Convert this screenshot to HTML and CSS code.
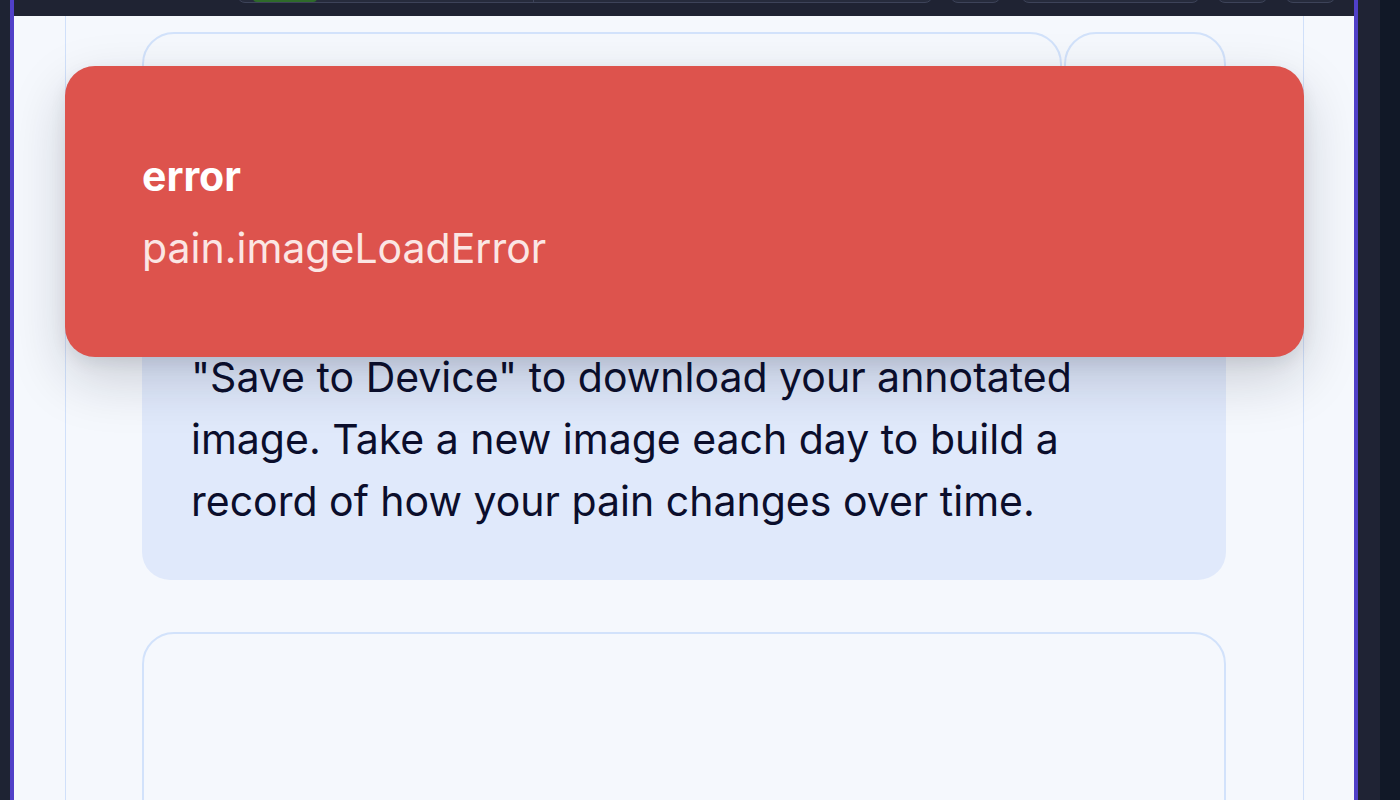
FILE: index.html
```html
<!DOCTYPE html>
<html lang="en">
<head>
<meta charset="utf-8">
<title>Pain Tracker</title>
<link rel="stylesheet" href="styles.css">
</head>
<body>
<div class="shell">
  <div class="gutter-left"></div>
  <div class="frame">
    <div class="topbar">
      <div class="tb-search">
        <span class="tb-green"></span>
        <span class="tb-divider"></span>
      </div>
      <div class="tb-btn tb-sm"></div>
      <div class="tb-btn tb-wide"></div>
      <div class="tb-btn tb-sm"></div>
      <div class="tb-btn tb-sm"></div>
    </div>
    <div class="stage">
      <div class="page">
        <div class="tabs">
          <div class="tab tab-main"></div>
          <div class="tab tab-side"></div>
        </div>
        <div class="info">
          <p><span class="lead">When you have finished marking your pain, tap</span> "Save to Device" to download your annotated image. Take a new image each day to build a record of how your pain changes over time.</p>
        </div>
        <div class="canvas-card"></div>
      </div>
      <div class="toast" role="alert">
        <div class="toast-title">error</div>
        <div class="toast-msg">pain.imageLoadError</div>
      </div>
    </div>
  </div>
  <div class="gutter-right"></div>
  <div class="gutter-edge"></div>
</div>
</body>
</html>
```
FILE: styles.css
```css
html, body {
  margin: 0;
  padding: 0;
  height: 100%;
  overflow: hidden;
  background: #1e2333;
  font-family: Inter, "Noto Sans", "Liberation Sans", sans-serif;
}

.shell {
  display: flex;
  height: 800px;
}

.gutter-left {
  width: 10px;
  background: #1e2333;
  flex: none;
}

.frame {
  width: 1340px;
  flex: none;
  border-left: 4px solid #5040c8;
  border-right: 4px solid #5040c8;
  display: flex;
  flex-direction: column;
  background: #f5f8fd;
}

.gutter-right {
  width: 22px;
  background: #1f2334;
  flex: none;
}

.gutter-edge {
  flex: 1;
  background: #111827;
}

/* top bar: controls cut by the top of the viewport */
.topbar {
  height: 16px;
  flex: none;
  background: #1f2333;
  display: flex;
  align-items: flex-start;
  padding-left: 223px;
  gap: 17px;
  overflow: hidden;
}

.tb-search,
.tb-btn {
  height: 20px;
  margin-top: -17px;
  border: 1px solid #3d4359;
  border-radius: 8px;
  background: #262b3c;
  flex: none;
  box-sizing: border-box;
}

.tb-search {
  width: 696px;
  display: flex;
  align-items: flex-start;
  padding-left: 15px;
}

.tb-green {
  width: 64px;
  height: 18px;
  background: #2e6a2a;
  border-radius: 4px;
}

.tb-divider {
  width: 1px;
  height: 18px;
  background: #3d4359;
  margin-left: 216px;
}

.tb-sm { width: 51px; }
.tb-wide { width: 179px; margin-left: 3px; }

/* stage */
.stage {
  flex: 1;
  display: flex;
  padding-left: 51px;
  overflow: hidden;
}

.page {
  width: 1239px;
  box-sizing: border-box;
  border-left: 1px solid #d0e0fa;
  border-right: 1px solid #d0e0fa;
  padding: 16px 77px 0 76px;
  display: flex;
  flex-direction: column;
}

.tabs {
  display: flex;
  gap: 2px;
  height: 164px;
  flex: none;
}

.tab {
  border: 2px solid #d2e2fb;
  border-radius: 32px;
  box-sizing: border-box;
  height: 100%;
}

.tab-main { width: 920px; }
.tab-side { flex: 1; }

.info {
  margin-top: 40px;
  background: #e0e9fb;
  border-radius: 28px;
  padding: 48px 49px;
  flex: none;
}

.info p {
  margin: 0;
  font-size: 41px;
  line-height: 62px;
  color: #0b0e2c;
}

.info .lead {
  display: block;
}

.canvas-card {
  margin-top: 52px;
  height: 400px;
  flex: none;
  border: 2px solid #d2e2fb;
  border-radius: 32px;
}

/* toast overlay */
.toast {
  position: absolute;
  left: 65px;
  top: 66px;
  width: 1239px;
  height: 291px;
  box-sizing: border-box;
  background: #dd534d;
  border-radius: 30px;
  box-shadow: 0 22px 56px rgba(15, 23, 42, 0.18), 0 6px 16px rgba(15, 23, 42, 0.08);
  padding: 86px 77px 0;
  color: #ffffff;
}

.toast-title {
  font-size: 41px;
  font-weight: 700;
  line-height: 48px;
}

.toast-msg {
  margin-top: 24px;
  font-size: 41px;
  font-weight: 400;
  line-height: 48px;
  color: #fbe6e4;
}
```
